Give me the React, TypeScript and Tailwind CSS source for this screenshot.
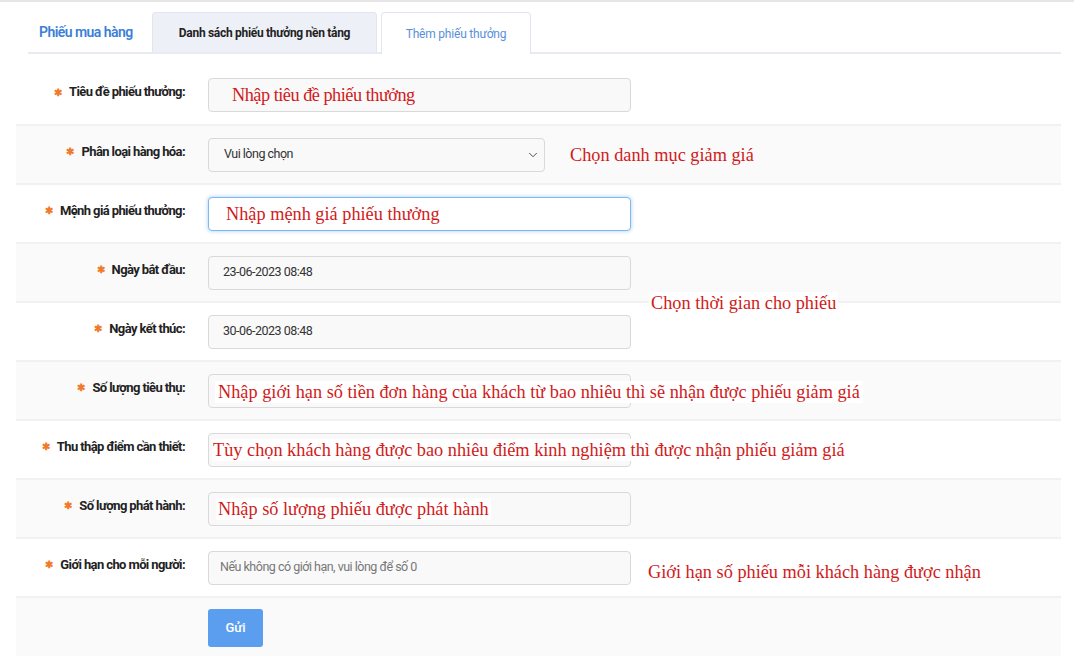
import { ChevronDown } from 'lucide-react';
import type { ReactNode } from 'react';

// ============================================
// THÊM PHIẾU THƯỞNG — FORM
// ============================================

const note = "font-['Liberation_Serif',serif] text-[18.3px] leading-[22px] text-[#d11a1a]";

function Label({ children }: { children: ReactNode }) {
  return (
    <div className="flex items-center justify-end gap-[7px] pb-[6px] text-[13px] font-bold text-[#222] tracking-[-0.6px]">
      <span className="text-[10px] text-[#ef7a2a] tracking-normal">✱</span>
      <span>{children}</span>
    </div>
  );
}

function Field({ children, w = 'w-[423px]', focus = false }: { children?: ReactNode; w?: string; focus?: boolean }) {
  return (
    <div
      className={
        'h-[34px] rounded-[4px] border flex items-center text-[12.5px] text-[#333] tracking-[-0.5px] ' +
        w +
        (focus
          ? ' bg-white border-[#7fb8ec] shadow-[0_0_4px_rgba(102,175,233,0.6)]'
          : ' bg-[#f9f9f9] border-[#d9d9d9]')
      }
    >
      {children}
    </div>
  );
}

function Row({ label, children, shade, first }: { label: string; children: ReactNode; shade?: boolean; first?: boolean }) {
  return (
    <div
      className={
        'relative grid grid-cols-[169px_1fr] gap-x-[23px] items-center border-b-2 border-[#f1f1f1] ' +
        (first ? 'h-[72px] pt-[12px] ' : 'h-[59px] ') +
        (shade ? 'bg-[#fafafa]' : 'bg-white')
      }
    >
      <Label>{label}</Label>
      <div className="flex items-center">{children}</div>
    </div>
  );
}

export default function App() {
  return (
    <div className="w-[1074px] h-[656px] overflow-hidden bg-white border-t-2 border-[#e6e6e6] font-['Roboto',sans-serif]">
      {/* Tabs */}
      <div className="ml-[28px] mt-[10px] w-[1033px] h-[42px] flex items-end border-b-2 border-[#e9ebf2]">
        <div className="w-[124px] h-[40px] flex items-center pl-[11px] text-[14px] font-semibold text-[#3c7fd9] tracking-[-0.55px]">
          Phiếu mua hàng
        </div>
        <div className="w-[225px] h-[40px] flex items-center justify-center rounded-t-[4px] border border-b-0 border-[#e2e5ee] bg-[#eef0f8] text-[12px] font-bold text-[#222] tracking-[-0.3px]">
          Danh sách phiếu thưởng nền tảng
        </div>
        <div className="ml-[4px] w-[150px] h-[42px] -mb-[2px] flex items-center justify-center rounded-t-[4px] border border-b-0 border-[#e2e5ee] bg-white text-[12px] text-[#5a8fd8] tracking-[-0.2px]">
          Thêm phiếu thưởng
        </div>
      </div>

      {/* Form */}
      <div className="relative ml-[16px] w-[1045px]">
        <Row label="Tiêu đề phiếu thưởng:" first>
          <Field>
            <span className={note + ' pl-[23px]'}>Nhập tiêu đề phiếu thưởng</span>
          </Field>
        </Row>

        <Row label="Phân loại hàng hóa:" shade>
          <Field w="w-[337px] justify-between pl-[15px] pr-[4px]">
            <span>Vui lòng chọn</span>
            <ChevronDown className="w-[14px] h-[14px] text-[#444]" strokeWidth={1.6} />
          </Field>
          <span className={note + ' ml-[25px]'}>Chọn danh mục giảm giá</span>
        </Row>

        <Row label="Mệnh giá phiếu thưởng:">
          <Field focus>
            <span className={note + ' pl-[17px] tracking-normal'}>Nhập mệnh giá phiếu thưởng</span>
          </Field>
        </Row>

        <Row label="Ngày bắt đầu:" shade>
          <Field>
            <span className="pl-[14px]">23-06-2023 08:48</span>
          </Field>
        </Row>

        <Row label="Ngày kết thúc:">
          <Field>
            <span className="pl-[14px]">30-06-2023 08:48</span>
          </Field>
          <span className={note + ' absolute left-[633px] -top-[11px] bg-white px-[2px]'}>Chọn thời gian cho phiếu</span>
        </Row>

        <Row label="Số lượng tiêu thụ:" shade>
          <Field />
          <span className={note + ' absolute left-[199px] top-[19px] bg-white px-[3px]'}>
            Nhập giới hạn số tiền đơn hàng của khách từ bao nhiêu thì sẽ nhận được phiếu giảm giá
          </span>
        </Row>

        <Row label="Thu thập điểm cần thiết:">
          <Field />
          <span className={note + ' absolute left-[196px] top-[18px] bg-white px-[1px]'}>
            Tùy chọn khách hàng được bao nhiêu điểm kinh nghiệm thì được nhận phiếu giảm giá
          </span>
        </Row>

        <Row label="Số lượng phát hành:" shade>
          <Field>
            <span className={note + ' ml-[7px] bg-white px-[2px] tracking-normal'}>Nhập số lượng phiếu được phát hành</span>
          </Field>
        </Row>

        <Row label="Giới hạn cho mỗi người:">
          <Field>
            <span className="pl-[11px] text-[#777]">Nếu không có giới hạn, vui lòng để số 0</span>
          </Field>
          <span className={note + ' ml-[17px] mt-[8px]'}>Giới hạn số phiếu mỗi khách hàng được nhận</span>
        </Row>

        <div className="grid grid-cols-[169px_1fr] gap-x-[23px] h-[60px] bg-[#fafafa] items-center">
          <div />
          <div>
            <button className="w-[55px] h-[38px] rounded-[3px] bg-[#5b9ef0] text-[13px] font-medium text-white">Gửi</button>
          </div>
        </div>
      </div>
    </div>
  );
}
